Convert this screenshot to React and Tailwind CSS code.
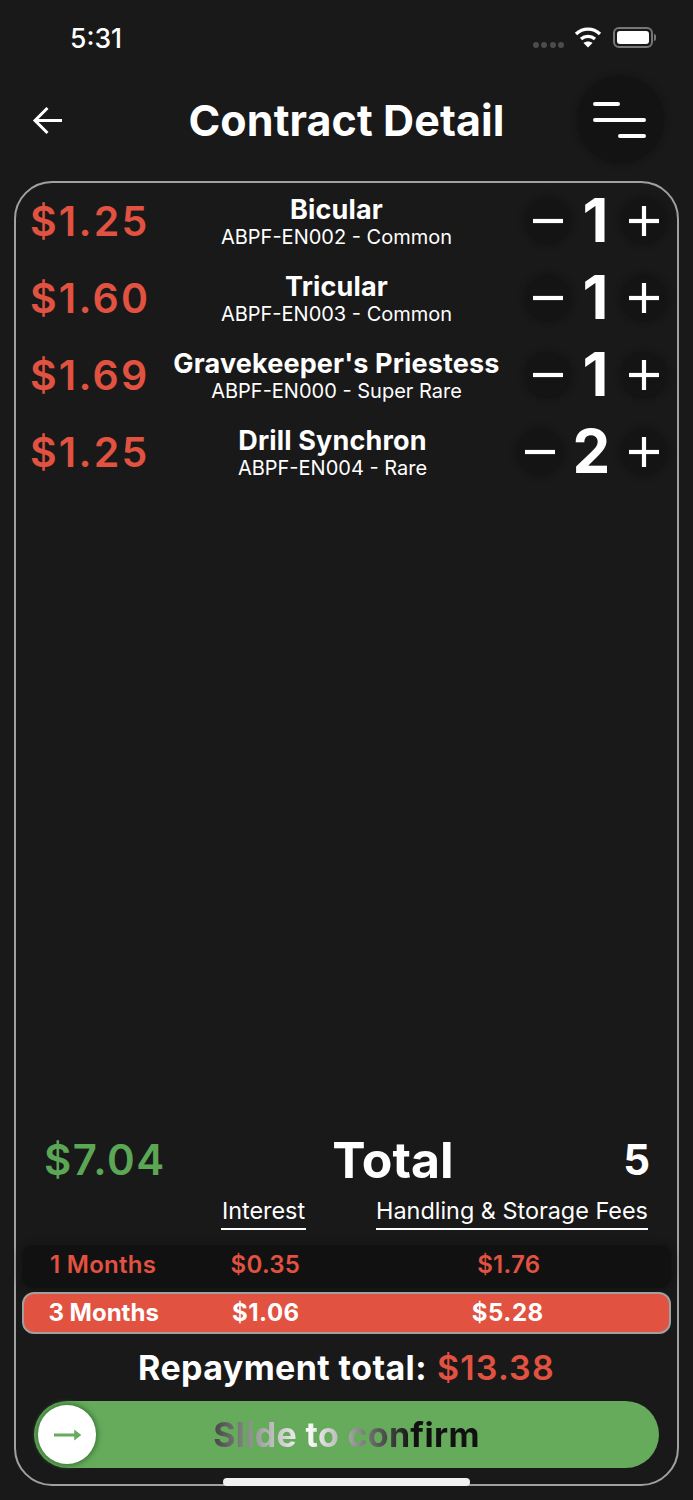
import React from "react";

const items = [
  { price: "$1.25", name: "Bicular", sub: "ABPF-EN002 - Common", qty: 1 },
  { price: "$1.60", name: "Tricular", sub: "ABPF-EN003 - Common", qty: 1 },
  { price: "$1.69", name: "Gravekeeper's Priestess", sub: "ABPF-EN000 - Super Rare", qty: 1 },
  { price: "$1.25", name: "Drill Synchron", sub: "ABPF-EN004 - Rare", qty: 2 },
];

function Round({ kind }) {
  return (
    <div className="w-[46px] h-[46px] mb-[2px] rounded-full bg-[#141414] shadow-[0_0_5px_2px_#151515] flex items-center justify-center shrink-0">
      <svg width="30" height="30" viewBox="0 0 30 30" fill="none" stroke="white" strokeWidth="4.2">
        <path d="M0 15H30" />
        {kind === "plus" && <path d="M15 0V30" />}
      </svg>
    </div>
  );
}

function Row({ price, name, sub, qty }) {
  return (
    <div className="h-[77px] flex items-center pl-[14px] pr-[10px]">
      <div className="text-[41px] font-semibold text-[#e15241] tracking-[2.2px] leading-none shrink-0 w-[118px]">{price}</div>
      <div className="flex-1 text-center text-white min-w-0">
        <div className="text-[27px] font-bold leading-[32px] tracking-[0.15px] whitespace-nowrap">{name}</div>
        <div className="text-[20px] leading-[23px] whitespace-nowrap">{sub}</div>
      </div>
      <div className="flex items-center shrink-0">
        <Round kind="minus" />
        <div className={qty === 2 ? "w-[58px] pb-[3px] pr-[1px] text-center text-[60px] font-bold text-white leading-none" : "w-[50px] pb-[3px] pr-[1px] text-center text-[60px] font-bold text-white leading-none"}>{qty}</div>
        <Round kind="plus" />
      </div>
    </div>
  );
}

export default function App() {
  return (
    <div className="w-[693px] h-[1500px] bg-[#191919] flex flex-col overflow-hidden font-['Inter',sans-serif]">
      <div className="h-[75px] shrink-0 flex items-start justify-between pl-[70px] pr-[40px] pt-[22px]">
        <div className="text-[26.5px] font-medium text-white leading-[32px]">5:31</div>
        <div className="flex items-center pt-[4px]">
          <div className="flex gap-[2.5px] mt-[15px] mr-[10px]">
            <span className="w-[6px] h-[6px] rounded-full bg-[#4c4c4c]" />
            <span className="w-[6px] h-[6px] rounded-full bg-[#4c4c4c]" />
            <span className="w-[6px] h-[6px] rounded-full bg-[#4c4c4c]" />
            <span className="w-[6px] h-[6px] rounded-full bg-[#4c4c4c]" />
          </div>
          <svg width="28" height="22" viewBox="0 0 28 22" fill="none" className="mr-[11px]">
            <path d="M2 8C9 1.5 19 1.5 26 8" stroke="white" strokeWidth="3.4" />
            <path d="M7 13C11 9.5 17 9.5 21 13" stroke="white" strokeWidth="3.4" />
            <path d="M14 21.5L9.5 17C12 15 16 15 18.5 17Z" fill="white" />
          </svg>
          <div className="relative w-[40px] h-[21px] rounded-[6px] border-2 border-[#777] p-[2px]">
            <div className="w-full h-full rounded-[3px] bg-white" />
            <div className="absolute -right-[5px] top-[5px] w-[2px] h-[7px] rounded-r-full bg-[#777]" />
          </div>
        </div>
      </div>

      <div className="h-[90px] shrink-0 relative flex items-center justify-center">
        <svg className="absolute left-[32px] top-[31px]" width="31" height="29" viewBox="0 0 31 29" fill="none" stroke="white" strokeWidth="3">
          <path d="M30 14.5H3" />
          <path d="M15.5 2L3 14.5L15.5 27" />
        </svg>
        <div className="text-[43px] font-bold text-white leading-none tracking-[0.1px]">Contract Detail</div>
        <div className="absolute left-[577px] top-[1px] w-[87px] h-[87px] rounded-full bg-[#131313] shadow-[0_0_5px_2px_#151515]">
          <svg className="absolute left-[16px] top-[26px]" width="53" height="37" viewBox="0 0 53 37" fill="white">
            <rect x="0" y="0" width="27" height="4" rx="2" />
            <rect x="0" y="16" width="53" height="4" rx="2" />
            <rect x="25" y="32" width="28" height="4" rx="2" />
          </svg>
        </div>
      </div>

      <div className="h-[16px] shrink-0" />

      <div className="relative w-[665px] ml-[14px] flex-1 mb-[14px] border-2 border-[#a0a0a0] rounded-[38px] flex flex-col">
        {items.map((it, i) => (
          <Row key={i} {...it} />
        ))}
        <div className="flex-1" />

        <div className="flex items-center h-[60px] pt-[12px] pl-[28px] pr-[27px] text-white">
          <div className="text-[42px] font-semibold text-[#5ba756] w-[172px] leading-none tracking-[1.5px]">$7.04</div>
          <div className="flex-1 text-center text-[50px] font-bold leading-none pl-[20px]">Total</div>
          <div className="w-[100px] text-right text-[42px] font-bold leading-none">5</div>
        </div>

        <div className="flex h-[44px] mt-[3px] text-white text-[23.4px] leading-[30px]">
          <div className="ml-[205px] w-[85px] h-[43px] border-b-2 border-white text-center pt-[9px]">Interest</div>
          <div className="ml-[70px] w-[272px] h-[43px] border-b-2 border-white text-center pt-[9px] whitespace-nowrap">Handling &amp; Storage Fees</div>
        </div>

        <div className="mx-[6px] mt-[14px] h-[43px] pb-[4px] grid grid-cols-4 items-center rounded-[12px] bg-[#111111] shadow-[0_0_6px_2px_#141414] text-[24px] font-semibold tracking-[0.3px] text-[#e15241]">
          <div className="text-center">1 Months</div>
          <div className="text-center">$0.35</div>
          <div className="col-span-2 text-center">$1.76</div>
        </div>
        <div className="mx-[6px] mt-[4px] h-[42px] grid grid-cols-4 items-center rounded-[12px] bg-[#e15241] border-2 border-[#a0a0a0] text-[24px] font-bold tracking-[0.5px] text-white">
          <div className="text-center pr-[2px] tracking-normal">3 Months</div>
          <div className="text-center">$1.06</div>
          <div className="col-span-2 text-center">$5.28</div>
        </div>

        <div className="mt-[12px] h-[43px] flex items-center justify-center text-[34px] font-bold tracking-[0.4px] text-white gap-[10px]">
          <span>Repayment total:</span>
          <span className="text-[#e15241] font-semibold tracking-[1.2px]">$13.38</span>
        </div>

        <div className="relative mx-[18px] mt-[12px] mb-[16px] h-[67px] rounded-full bg-[#66ab5c] flex items-center justify-center">
          <div className="absolute left-[4px] top-[4px] w-[58px] h-[59px] rounded-full bg-white flex items-center justify-center shadow-[0_0_5px_2px_#3f7a3a]">
            <svg width="27" height="14" viewBox="0 0 27 14" fill="#66ab5c" stroke="#66ab5c" strokeWidth="3">
              <path d="M0 7H22" fill="none" />
              <path d="M21 3L26 7L21 11Z" strokeWidth="1.5" />
            </svg>
          </div>
          <div className="text-[34px] font-bold leading-none tracking-[0.3px] text-transparent bg-clip-text bg-[linear-gradient(90deg,#444_0%,#bbb_22%,#ffffff_35%,#aaa_50%,#666_60%,#111_75%,#111_100%)]">
            Slide to confirm
          </div>
        </div>

        <div className="absolute left-[207px] bottom-[-2px] w-[247px] h-[8px] rounded-full bg-[#f2f2f2]" />
      </div>
    </div>
  );
}
